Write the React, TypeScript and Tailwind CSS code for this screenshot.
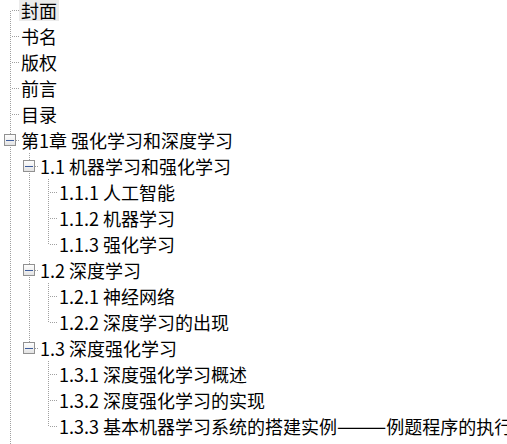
import React from "react";

type Row = {
  label: React.ReactNode;
  level: number;
  box?: boolean;
  last?: boolean;
  first?: boolean;
  anc: boolean[];
  selected?: boolean;
};

const rows: Row[] = [
  { label: "封面", level: 0, anc: [], first: true, selected: true },
  { label: "书名", level: 0, anc: [] },
  { label: "版权", level: 0, anc: [] },
  { label: "前言", level: 0, anc: [] },
  { label: "目录", level: 0, anc: [] },
  { label: "第1章 强化学习和深度学习", level: 0, anc: [], box: true },
  { label: "1.1 机器学习和强化学习", level: 1, anc: [true], box: true },
  { label: "1.1.1 人工智能", level: 2, anc: [true, true] },
  { label: "1.1.2 机器学习", level: 2, anc: [true, true] },
  { label: "1.1.3 强化学习", level: 2, anc: [true, true], last: true },
  { label: "1.2 深度学习", level: 1, anc: [true], box: true },
  { label: "1.2.1 神经网络", level: 2, anc: [true, true] },
  { label: "1.2.2 深度学习的出现", level: 2, anc: [true, true], last: true },
  { label: "1.3 深度强化学习", level: 1, anc: [true], box: true, last: true },
  { label: "1.3.1 深度强化学习概述", level: 2, anc: [true, false] },
  { label: "1.3.2 深度强化学习的实现", level: 2, anc: [true, false] },
  {
    label: (
      <>
        1.3.3 基本机器学习系统的搭建实例
        <span className="text-[20px]">———</span>
        例题程序的执行
      </>
    ),
    level: 2,
    anc: [true, false],
    last: true,
  },
  { label: "第2章 强化学习的实例", level: 0, anc: [], box: true },
  { label: "2.1 强化学习的基础", level: 1, anc: [true], box: true },
];

const DOT = "#a0a0a0";

function AncCell({ on }: { on: boolean }) {
  return (
    <svg width="19" height="26" className="shrink-0 block">
      {on && (
        <line x1="10.5" y1="0" x2="10.5" y2="26" stroke={DOT} strokeWidth="1" strokeDasharray="1 1" />
      )}
    </svg>
  );
}

function OwnCell({ row, id }: { row: Row; id: number }) {
  const gid = "g" + id;
  return (
    <svg width="19" height="26" className="shrink-0 block">
      <defs>
        <linearGradient id={gid} x1="0" y1="0" x2="0" y2="1">
          <stop offset="0" stopColor="#ffffff" />
          <stop offset="1" stopColor="#e2e2e2" />
        </linearGradient>
      </defs>
      {!row.first && (
        <line x1="10.5" y1="0" x2="10.5" y2="13" stroke={DOT} strokeDasharray="1 1" />
      )}
      {!row.last && (
        <line x1="10.5" y1="14" x2="10.5" y2="26" stroke={DOT} strokeDasharray="1 1" />
      )}
      <line x1="12" y1="13.5" x2="19" y2="13.5" stroke={DOT} strokeDasharray="1 1" />
      {row.box && (
        <>
          <rect x="4.5" y="7.5" width="11" height="11" fill={`url(#${gid})`} stroke="#919191" />
          <line x1="6" y1="13.5" x2="14" y2="13.5" stroke="#3d5c9c" />
        </>
      )}
    </svg>
  );
}

export default function App() {
  return (
    <div
      className="w-[507px] h-[444px] overflow-hidden bg-white text-black"
      style={{ fontFamily: '"Noto Sans CJK SC", "Noto Sans", sans-serif' }}
    >
      <div className="-mt-[3px] flex flex-col">
        {rows.map((r, i) => (
          <div key={i} className="flex h-[26px] items-center whitespace-nowrap">
            {r.anc.map((c, j) => (
              <AncCell key={j} on={c} />
            ))}
            <OwnCell row={r} id={i} />
            <span
              className={
                "px-[2px] h-[22px] flex items-center text-[18px] leading-none " +
                (r.selected ? "bg-[#ebebeb]" : "")
              }
            >
              {r.label}
            </span>
          </div>
        ))}
      </div>
    </div>
  );
}
